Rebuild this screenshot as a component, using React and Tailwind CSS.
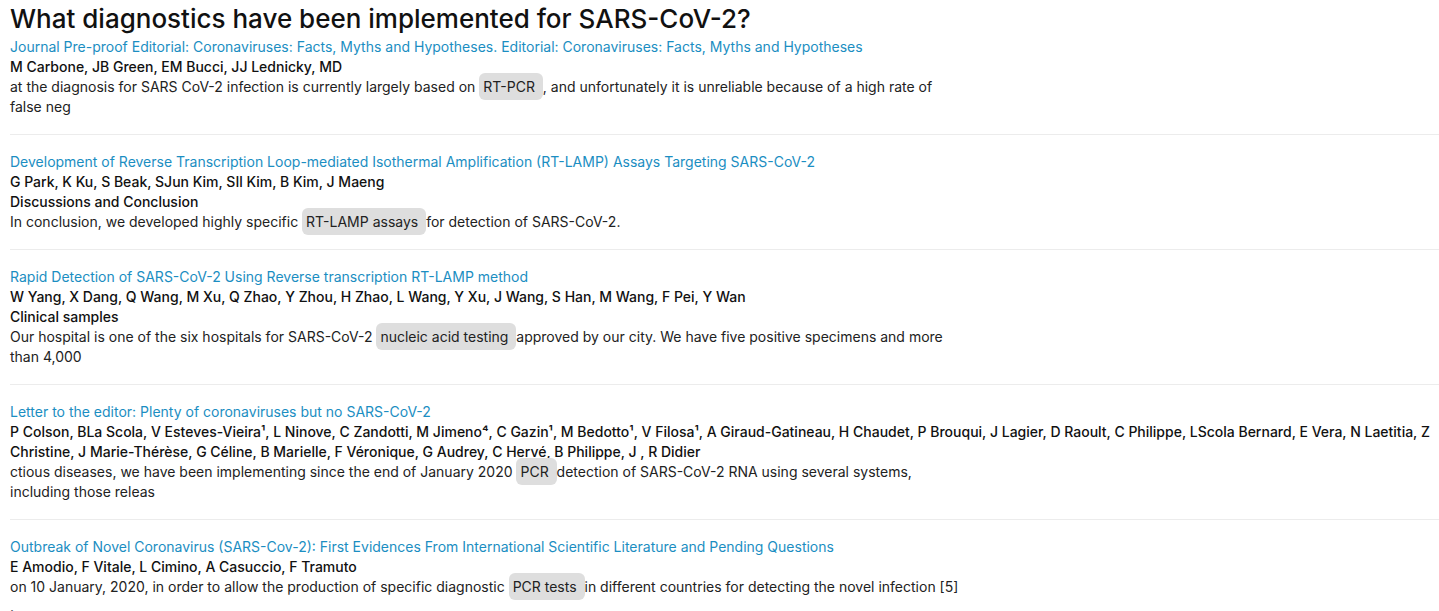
import React from "react";

const items = [
  {
    title: "Journal Pre-proof Editorial: Coronaviruses: Facts, Myths and Hypotheses. Editorial: Coronaviruses: Facts, Myths and Hypotheses",
    authors: "M Carbone, JB Green, EM Bucci, JJ Lednicky, MD",
    section: null,
    before: "at the diagnosis for SARS CoV-2 infection is currently largely based on ",
    mark: "RT-PCR",
    after: ", and unfortunately it is unreliable because of a high rate of false neg",
  },
  {
    title: "Development of Reverse Transcription Loop-mediated Isothermal Amplification (RT-LAMP) Assays Targeting SARS-CoV-2",
    authors: "G Park, K Ku, S Beak, SJun Kim, SIl Kim, B Kim, J Maeng",
    section: "Discussions and Conclusion",
    before: "In conclusion, we developed highly specific ",
    mark: "RT-LAMP assays",
    after: "for detection of SARS-CoV-2.",
  },
  {
    title: "Rapid Detection of SARS-CoV-2 Using Reverse transcription RT-LAMP method",
    authors: "W Yang, X Dang, Q Wang, M Xu, Q Zhao, Y Zhou, H Zhao, L Wang, Y Xu, J Wang, S Han, M Wang, F Pei, Y Wan",
    section: "Clinical samples",
    before: "Our hospital is one of the six hospitals for SARS-CoV-2 ",
    mark: "nucleic acid testing",
    after: "approved by our city. We have five positive specimens and more than 4,000",
  },
  {
    title: "Letter to the editor: Plenty of coronaviruses but no SARS-CoV-2",
    authors: "P Colson, BLa Scola, V Esteves-Vieira¹, L Ninove, C Zandotti, M Jimeno⁴, C Gazin¹, M Bedotto¹, V Filosa¹, A Giraud-Gatineau, H Chaudet, P Brouqui, J Lagier, D Raoult, C Philippe, LScola Bernard, E Vera, N Laetitia, Z Christine, J Marie-Thérèse, G Céline, B Marielle, F Véronique, G Audrey, C Hervé, B Philippe, J , R Didier",
    section: null,
    before: "ctious diseases, we have been implementing since the end of January 2020 ",
    mark: "PCR",
    after: "detection of SARS-CoV-2 RNA using several systems, including those releas",
  },
  {
    title: "Outbreak of Novel Coronavirus (SARS-Cov-2): First Evidences From International Scientific Literature and Pending Questions",
    authors: "E Amodio, F Vitale, L Cimino, A Casuccio, F Tramuto",
    section: null,
    before: "on 10 January, 2020, in order to allow the production of specific diagnostic ",
    mark: "PCR tests",
    after: "in different countries for detecting the novel infection [5] .",
  },
];

export default function App() {
  return (
    <div
      className="bg-white min-h-screen pl-[10px] text-[14px] leading-[20px] text-[#111]"
      style={{ fontFamily: "Inter, 'Noto Sans', sans-serif" }}
    >
      <h1 className="text-[26px] leading-[37px] font-medium text-[#111]">
        What diagnostics have been implemented for SARS-CoV-2?
      </h1>
      <div className="flex flex-col">
        {items.map((it, i) => (
          <div
            key={i}
            className={
              i === 0
                ? "pb-[17px] border-b border-[#ececec]"
                : "pt-[17px] pb-[17px] border-b border-[#ececec]"
            }
          >
            <div className="text-[#1b8ec2]">{it.title}</div>
            <div className="font-medium text-[#111]">{it.authors}</div>
            {it.section && <div className="font-medium text-[#111]">{it.section}</div>}
            <div className="w-2/3 text-[#222]">
              {it.before}
              <span className="bg-[#dedede] rounded-md pl-[4px] pr-[4px] py-[5px]">{it.mark} </span>
              {it.after}
            </div>
          </div>
        ))}
      </div>
    </div>
  );
}
